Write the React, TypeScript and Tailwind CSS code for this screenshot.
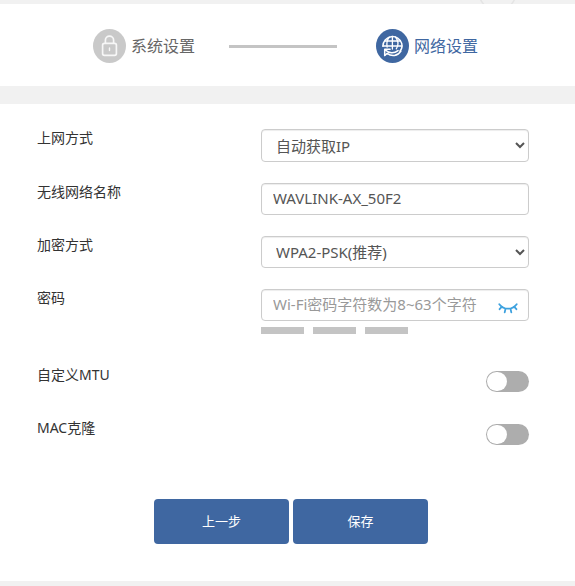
import { useState } from "react";
import type { ReactNode } from "react";

const wanModes = ["自动获取IP", "静态IP", "PPPoE拨号"];
const encryptions = ["WPA2-PSK(推荐)", "WPA/WPA2-PSK", "不加密"];

const controlClass =
  "block w-full rounded border border-[#ccc] bg-white text-[15px] text-[#555] shadow-[inset_0_1px_1px_rgba(0,0,0,0.075)] outline-none";

function LockIcon() {
  return (
    <svg viewBox="0 0 33 34" className="w-[33px] h-[34px]" fill="none" aria-hidden="true">
      <ellipse cx="16.5" cy="17" rx="16.5" ry="17" fill="#c9c9c9" />
      <g stroke="#f7f7f7" strokeWidth="1.7" strokeLinecap="round">
        <rect x="9.6" y="14.4" width="13.8" height="12" rx="1.8" />
        <path d="M12.4 14.2v-3a4.100 4.100 0 0 1 8.200 0v3" />
        <path d="M16.500 19v2.600" strokeWidth="1.400" />
      </g>
    </svg>
  );
}

function GlobeIcon() {
  return (
    <svg viewBox="0 0 33 34" className="w-[33px] h-[34px]" fill="none" aria-hidden="true">
      <ellipse cx="16.5" cy="17" rx="16.5" ry="17" fill="#3f67a1" />
      <g stroke="#fff" strokeWidth="1.5" strokeLinecap="round" strokeLinejoin="round">
        <path d="M6.900 17.200a9.600 9.600 0 0 1 18.800-2.800c.8 3.100 0 5.700-1.700 7.700" />
        <path d="M7 17h18.800M9 12h15.400M16.400 7.500V20" strokeWidth="1.300" />
        <path d="M13.300 8c-2.300 2.800-2.800 6.300-2.200 10M19.500 8c2.800 3.600 3 8.400.8 11.800" strokeWidth="1.300" />
        <path d="M8.700 26.400v-6.200h5.400M9.200 20.700c3.600 3.900 8.800 4.200 12.800.9" />
        <path d="M8.700 26.400l2.500-2c4.400 3.400 10.500 2.800 13.700-2.300" />
      </g>
    </svg>
  );
}

function ClosedEyeIcon() {
  return (
    <svg
      viewBox="0 0 20 12"
      className="w-5 h-3"
      fill="none"
      stroke="#3ea2df"
      strokeWidth="1.8"
      strokeLinecap="round"
      aria-hidden="true"
    >
      <path d="M1.300 2.200c4.600 6 12.800 6 17.400 0" />
      <path d="M3.700 4.800 1.600 7.200M16.300 4.800l2.100 2.400M7.500 6.800l-.8 3.600M12.500 6.800l.8 3.600" />
    </svg>
  );
}

function FormRow({ label, htmlFor, children }: { label: string; htmlFor: string; children: ReactNode }) {
  return (
    <div className="flex items-start">
      <label htmlFor={htmlFor} className="w-[224px] shrink-0 text-[14px] leading-[18px] text-[#333]">
        {label}
      </label>
      <div className="flex-1 min-w-0">{children}</div>
    </div>
  );
}

function Toggle({ id }: { id: string }) {
  return (
    <div className="flex justify-end pt-[5px] pb-[6px]">
      <input
        id={id}
        type="checkbox"
        role="switch"
        className="block h-[21px] w-[43px] cursor-pointer appearance-none rounded-full bg-[#adadad] p-px before:block before:h-[19px] before:w-5 before:rounded-full before:bg-white checked:bg-[#3f67a1] checked:before:ml-[21px]"
      />
    </div>
  );
}

export default function App() {
  const [ssid, setSsid] = useState("WAVLINK-AX_50F2");
  const [password, setPassword] = useState("");
  const [showPassword, setShowPassword] = useState(false);

  return (
    <div className="min-h-screen bg-[#f1f1f1] font-['Noto_Sans','Noto_Sans_CJK_SC',sans-serif]">
      <div className="flex h-1 justify-end overflow-hidden pr-[59px]">
        <svg viewBox="0 0 37 4" className="w-[37px] h-1" fill="none" aria-hidden="true">
          <circle cx="18.5" cy="-8" r="18.5" stroke="#e4e4e4" strokeWidth="1.5" />
        </svg>
      </div>
      <header className="flex items-center justify-center bg-white pt-[25px] pb-[23px] pr-1">
        <div className="flex items-center gap-[5px] text-[16px] text-[#666]">
          <LockIcon />
          <span>系统设置</span>
        </div>
        <div className="ml-[34px] mr-[39px] h-[3px] w-[108px] bg-[#c4c4c4]" />
        <div className="flex items-center gap-[5px] text-[16px] text-[#3f67a1]">
          <GlobeIcon />
          <span>网络设置</span>
        </div>
      </header>

      <form className="mt-[18px] bg-white pt-[25px] pb-[37px]" onSubmit={(e) => e.preventDefault()}>
        <div className="flex flex-col gap-[21px] pl-[37px] pr-[46px]">
          <FormRow label="上网方式" htmlFor="wan-mode">
            <select id="wan-mode" className={`${controlClass} h-[33px] pl-[10px]`}>
              {wanModes.map((mode) => (
                <option key={mode}>{mode}</option>
              ))}
            </select>
          </FormRow>
          <FormRow label="无线网络名称" htmlFor="ssid">
            <input
              id="ssid"
              type="text"
              value={ssid}
              onChange={(e) => setSsid(e.target.value)}
              className={`${controlClass} h-8 px-[11px] pb-0.5`}
            />
          </FormRow>
          <FormRow label="加密方式" htmlFor="encryption">
            <select id="encryption" className={`${controlClass} h-8 pl-[10px]`}>
              {encryptions.map((name) => (
                <option key={name}>{name}</option>
              ))}
            </select>
          </FormRow>
          <FormRow label="密码" htmlFor="password">
            <div className="relative">
              <input
                id="password"
                type={showPassword ? "text" : "password"}
                value={password}
                onChange={(e) => setPassword(e.target.value)}
                placeholder="Wi-Fi密码字符数为8~63个字符"
                className={`${controlClass} h-8 pl-[11px] pr-10 pb-0.5 placeholder:text-[#999]`}
              />
              <button
                type="button"
                aria-label="显示密码"
                onClick={() => setShowPassword(!showPassword)}
                className="absolute right-[11px] top-[13px] cursor-pointer"
              >
                <ClosedEyeIcon />
              </button>
            </div>
            <div className="mt-[6px] flex gap-[9px]">
              <div className="h-[7px] w-[43px] bg-[#c4c4c4]" />
              <div className="h-[7px] w-[43px] bg-[#c4c4c4]" />
              <div className="h-[7px] w-[43px] bg-[#c4c4c4]" />
            </div>
          </FormRow>
        </div>

        <div className="mt-8 flex flex-col gap-[21px] pl-[37px] pr-[46px]">
          <FormRow label="自定义MTU" htmlFor="custom-mtu">
            <Toggle id="custom-mtu" />
          </FormRow>
          <FormRow label="MAC克隆" htmlFor="mac-clone">
            <Toggle id="mac-clone" />
          </FormRow>
        </div>

        <div className="mt-12 flex justify-center gap-1 pl-[7px]">
          <button type="button" className="h-[45px] w-[135px] cursor-pointer rounded bg-[#3f67a1] text-[13px] text-white">
            上一步
          </button>
          <button type="submit" className="h-[45px] w-[135px] cursor-pointer rounded bg-[#3f67a1] text-[13px] text-white">
            保存
          </button>
        </div>
      </form>
    </div>
  );
}
